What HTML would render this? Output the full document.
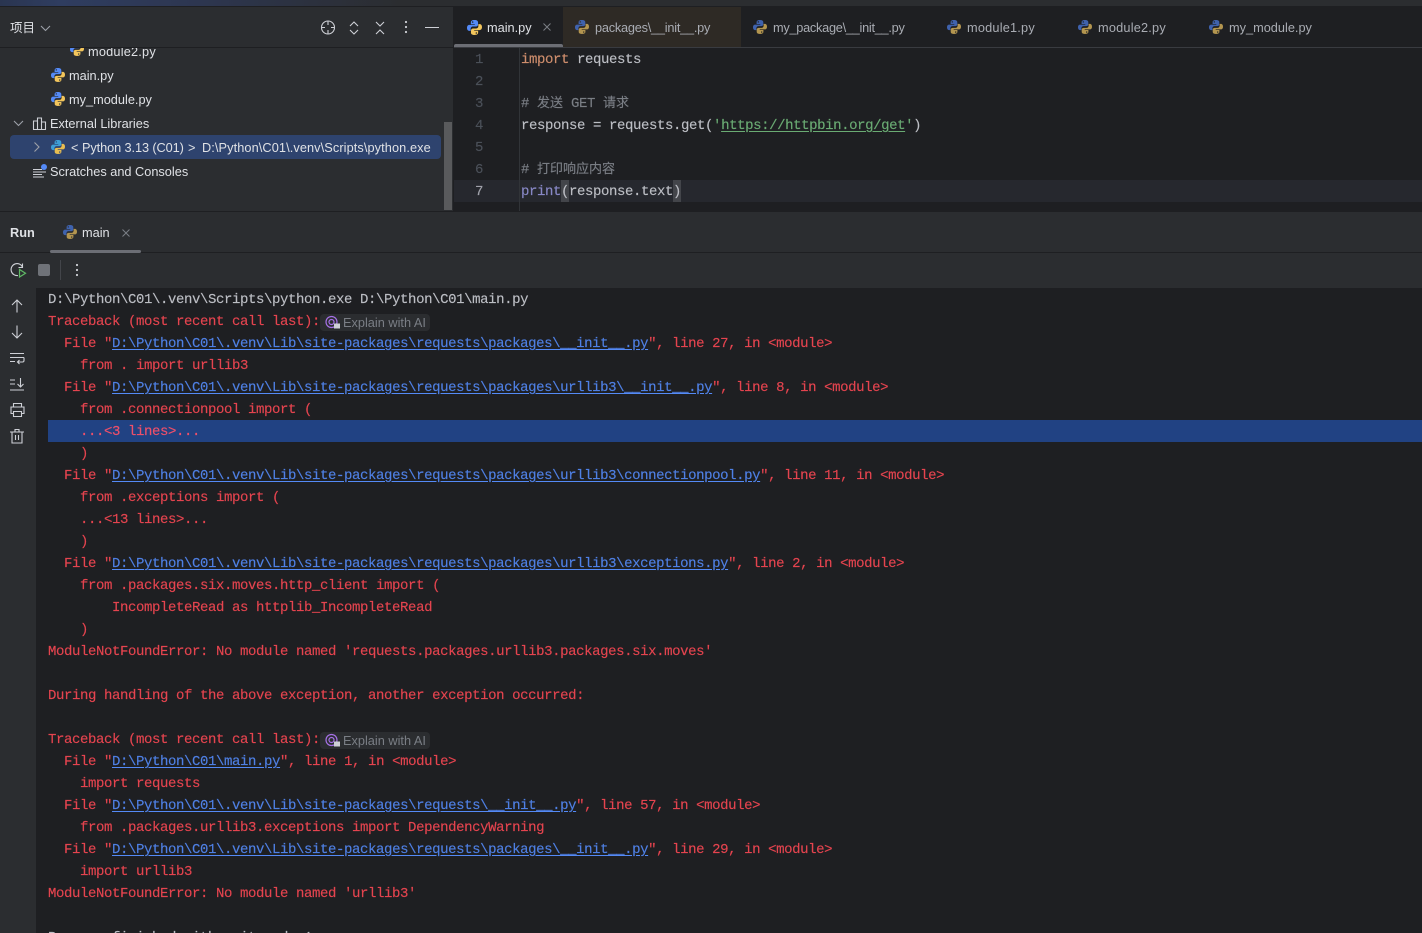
<!DOCTYPE html>
<html><head><meta charset="utf-8"><style>
html,body{margin:0;padding:0;background:#1e1f22;overflow:hidden;width:1422px;height:933px}
#r{width:1422px;height:933px;position:relative;overflow:hidden;font-family:"Liberation Sans","Noto Sans CJK SC",sans-serif;font-size:12.75px;color:#dfe1e5}
.a{position:absolute}
.t{position:absolute;white-space:pre;line-height:18px;height:18px}
.m{position:absolute;white-space:pre;font-family:"Liberation Mono","Noto Sans CJK SC",monospace;font-size:14px;letter-spacing:-.4px;line-height:22px;height:22px;-webkit-text-stroke:.15px currentColor;margin-top:1px}
.m b{font-weight:400;font-size:13px;letter-spacing:0;font-family:"Noto Sans CJK SC",sans-serif;line-height:1}
.c{left:48px;color:#e5444f}
.l{color:#4f80e5;text-decoration:underline;text-decoration-color:#548af7;text-underline-offset:2px}
svg{position:absolute;overflow:visible}
.i{fill:none;stroke:#ced0d6;stroke-width:1.1}
.g{color:#4b5059}
.e{left:521px;color:#bcbec4}
</style></head><body><div id="r">
<svg width="0" height="0"><defs><symbol id="py" viewBox="1 1 14 14"><path d="M8 1C5.5 1 4.6 2 4.6 3.2V5H8.3v.6H3.200C1.800 5.600 1 6.700 1 8.300c0 1.700.8 2.800 2.100 2.800H4.400V9.300c0-1.300 1-2.200 2.300-2.200h2.700c1 0 1.900-.8 1.900-1.900V3.200C11.300 1.900 10.300 1 8 1zM6.300 2.200a.7.700 0 110 1.400.7.700 0 010-1.400z" fill="#548af7"/><path d="M8 15c2.500 0 3.400-1 3.400-2.200V11H7.700v-.6h5.100c1.400 0 2.200-1.100 2.200-2.700 0-1.700-.8-2.800-2.100-2.800h-1.300v1.800c0 1.300-1 2.200-2.300 2.200H6.600c-1 0-1.900.8-1.900 1.900v2C4.700 14.100 5.700 15 8 15zm1.700-1.200a.7.700 0 110-1.400.7.700 0 010 1.400z" fill="#f2c55c"/></symbol>
<symbol id="pd" viewBox="1 1 14 14"><path d="M8 1C5.500 1 4.600 2 4.600 3.200V5H8.300v.6H3.200C1.800 5.600 1 6.700 1 8.300c0 1.700.8 2.800 2.100 2.800H4.400V9.300c0-1.300 1-2.200 2.300-2.200h2.700c1 0 1.900-.8 1.900-1.900V3.200C11.300 1.900 10.300 1 8 1zM6.300 2.200a.7.700 0 110 1.400.7.700 0 010-1.400z" fill="#3f62ad"/><path d="M8 15c2.500 0 3.400-1 3.400-2.200V11H7.700v-.6h5.100c1.400 0 2.200-1.100 2.200-2.700 0-1.700-.8-2.800-2.100-2.800h-1.300v1.800c0 1.300-1 2.200-2.300 2.200H6.600c-1 0-1.900.8-1.900 1.900v2C4.700 14.100 5.700 15 8 15zm1.700-1.200a.7.700 0 110-1.400.7.700 0 010 1.400z" fill="#b3954f"/></symbol>
<symbol id="ps" viewBox="1 1 14 14"><path d="M8 1C5.500 1 4.600 2 4.600 3.200V5H8.300v.6H3.200C1.800 5.600 1 6.700 1 8.300c0 1.700.8 2.800 2.100 2.800H4.400V9.300c0-1.300 1-2.200 2.300-2.200h2.700c1 0 1.900-.8 1.900-1.900V3.200C11.300 1.900 10.300 1 8 1zM6.300 2.200a.7.700 0 110 1.400.7.700 0 010-1.400z" fill="#3d9ed6"/><path d="M8 15c2.500 0 3.400-1 3.400-2.200V11H7.700v-.6h5.100c1.400 0 2.200-1.100 2.200-2.700 0-1.700-.8-2.800-2.100-2.800h-1.300v1.800c0 1.300-1 2.200-2.300 2.200H6.600c-1 0-1.900.8-1.900 1.900v2C4.700 14.100 5.700 15 8 15zm1.700-1.200a.7.700 0 110-1.400.7.700 0 010 1.400z" fill="#e8bd50"/></symbol></defs></svg>

<!-- top strip -->
<div class="a" style="left:0;top:0;width:1422px;height:6px;background:#2b2d30"></div>
<div class="a" style="left:0;top:0;width:400px;height:6px;background:linear-gradient(90deg,#2a3550,#2f3d60 15%,#2d3650 50%,#2b2d30)"></div>
<div class="a" style="left:0;top:6px;width:1422px;height:1px;background:#1e1f22"></div>

<!-- project panel -->
<div class="a" style="left:0;top:7px;width:453px;height:204px;background:#2b2d30"></div>
<div class="a" style="left:0;top:47px;width:453px;height:1px;background:#1e1f22"></div>
<div class="t" style="left:10px;top:19px;font-size:12.5px;color:#dfe1e5">项目</div>
<svg style="left:40px;top:23px" width="11" height="10"><path d="M1 3l4.500 4.500L10 3" fill="none" stroke="#9da0a8" stroke-width="1.100"/></svg>
<svg style="left:320px;top:20px" width="16" height="16"><circle class="i" cx="8" cy="7.500" r="6.500"/><path class="i" d="M8 1v4M8 10v4M1 7.500h4M11 7.500h4"/></svg>
<svg style="left:348px;top:20px" width="12" height="16"><path class="i" d="M2 6l4-4 4 4M2 10l4 4 4-4"/></svg>
<svg style="left:374px;top:20px" width="12" height="16"><path class="i" d="M2 2l4 4 4-4M2 14l4-4 4 4"/></svg>
<svg style="left:403px;top:19px" width="6" height="16"><circle cx="3" cy="3" r="1.100" fill="#ced0d6"/><circle cx="3" cy="8" r="1.100" fill="#ced0d6"/><circle cx="3" cy="13" r="1.100" fill="#ced0d6"/></svg>
<div class="a" style="left:425px;top:26.500px;width:14px;height:1px;background:#ced0d6"></div>

<div class="a" style="left:0;top:48px;width:453px;height:163px;overflow:hidden">
<svg style="left:70px;top:-6px" width="14" height="14"><use href="#py"/></svg>
<div class="t" style="left:88px;top:-5px;letter-spacing:.2px">module2.py</div>
<svg style="left:51px;top:20px" width="14" height="14"><use href="#py"/></svg>
<div class="t" style="left:69px;top:19px">main.py</div>
<svg style="left:51px;top:44px" width="14" height="14"><use href="#py"/></svg>
<div class="t" style="left:69px;top:43px">my_module.py</div>
<svg style="left:13px;top:71px" width="11" height="10"><path d="M1 2l4.500 4.500L10 2" fill="none" stroke="#9da0a8" stroke-width="1.100"/></svg>
<svg style="left:33px;top:69px" width="14" height="13"><path class="i" d="M.5 12.500V4h4v8.500M4.500 12.500V1h4v11.500M8.500 12.500V5h4v7.500M0 12.500h13"/></svg>
<div class="t" style="left:50px;top:67px">External Libraries</div>
<div class="a" style="left:10px;top:87px;width:431px;height:24px;background:#2e436e;border-radius:4px"></div>
<svg style="left:33px;top:93px" width="8" height="12"><path d="M1.500 1.500L6 6l-4.500 4.500" fill="none" stroke="#9da0a8" stroke-width="1.100"/></svg>
<svg style="left:51px;top:92px" width="14" height="14"><use href="#ps"/></svg>
<div class="t" style="left:71px;top:91px">&lt;</div>
<div class="t" style="left:82px;top:91px;letter-spacing:-.1px">Python 3.13 (C01)</div>
<div class="t" style="left:188px;top:91px">&gt;</div>
<div class="t" style="left:202px;top:91px;letter-spacing:.09px">D:\Python\C01\.venv\Scripts\python.exe</div>
<svg style="left:33px;top:116px" width="15" height="14"><path class="i" d="M0 5.500h9M0 8h13M0 10.500h9M0 13h11"/><circle cx="11" cy="3" r="3" fill="#548af7"/></svg>
<div class="t" style="left:50px;top:115px">Scratches and Consoles</div>
</div>
<div class="a" style="left:444px;top:122px;width:8px;height:88px;background:#595a5c"></div>
<div class="a" style="left:453px;top:7px;width:1px;height:204px;background:#1e1f22"></div>

<!-- tabs -->
<div class="a" style="left:454px;top:7px;width:968px;height:40px;background:#1e1f22"></div>
<div class="a" style="left:563px;top:7px;width:178px;height:40px;background:#2e2a25"></div>
<div class="a" style="left:454px;top:47px;width:968px;height:1px;background:#393b40"></div>
<div class="a" style="left:454px;top:44px;width:109px;height:3px;background:#6c6e75;border-radius:2px 2px 0 0"></div>
<svg style="left:467px;top:20px" width="15" height="15"><use href="#py"/></svg>
<div class="t" style="left:487px;top:19px">main.py</div>
<svg style="left:543px;top:23px" width="9" height="9"><path d="M.5.500l7 7M7.500.500l-7 7" stroke="#7a7e85" fill="none"/></svg>
<svg style="left:575px;top:20px" width="14" height="14"><use href="#pd"/></svg>
<div class="t" style="left:595px;top:19px;color:#a9acb3;letter-spacing:-.23px">packages\__init__.py</div>
<svg style="left:753px;top:20px" width="14" height="14"><use href="#pd"/></svg>
<div class="t" style="left:773px;top:19px;color:#a9acb3;letter-spacing:-.27px">my_package\__init__.py</div>
<svg style="left:947px;top:20px" width="14" height="14"><use href="#pd"/></svg>
<div class="t" style="left:967px;top:19px;color:#a9acb3;letter-spacing:.2px">module1.py</div>
<svg style="left:1078px;top:20px" width="14" height="14"><use href="#pd"/></svg>
<div class="t" style="left:1098px;top:19px;color:#a9acb3;letter-spacing:.2px">module2.py</div>
<svg style="left:1209px;top:20px" width="14" height="14"><use href="#pd"/></svg>
<div class="t" style="left:1229px;top:19px;color:#a9acb3">my_module.py</div>

<!-- editor -->
<div class="a" style="left:454px;top:180px;width:968px;height:22px;background:#26282e"></div>
<div class="a" style="left:519px;top:48px;width:1px;height:163px;background:#313438"></div>
<div class="m g" style="left:475px;top:48px">1</div>
<div class="m g" style="left:475px;top:70px">2</div>
<div class="m g" style="left:475px;top:92px">3</div>
<div class="m g" style="left:475px;top:114px">4</div>
<div class="m g" style="left:475px;top:136px">5</div>
<div class="m g" style="left:475px;top:158px">6</div>
<div class="m" style="left:475px;top:180px;color:#a1a3ab">7</div>
<div class="m e" style="top:48px"><span style="color:#cf8e6d">import</span> requests</div>
<div class="m e" style="top:92px;color:#7a7e85"># <b>发送</b> GET <b>请求</b></div>
<div class="m e" style="top:114px">response = requests.get(<span style="color:#6aab73">'<span style="text-decoration:underline;text-underline-offset:2px">https://httpbin.org/get</span>'</span>)</div>
<div class="m e" style="top:158px;color:#7a7e85"># <b>打印响应内容</b></div>
<div class="a" style="left:561px;top:180px;width:8px;height:22px;background:#43454a"></div>
<div class="a" style="left:673px;top:180px;width:8px;height:22px;background:#43454a"></div>
<div class="m e" style="top:180px"><span style="color:#8888c6">print</span>(response.text)</div>
<div class="a" style="left:0;top:211px;width:1422px;height:1px;background:#1e1f22"></div>

<!-- run tool header -->
<div class="a" style="left:0;top:212px;width:1422px;height:76px;background:#2b2d30"></div>
<div class="a" style="left:0;top:252px;width:1422px;height:1px;background:#1e1f22"></div>
<div class="t" style="left:10px;top:224px;font-weight:700">Run</div>
<svg style="left:63px;top:225px" width="14" height="14"><use href="#pd"/></svg>
<div class="t" style="left:82px;top:224px">main</div>
<svg style="left:122px;top:229px" width="8" height="8"><path d="M.5.500l7 7M7.500.500l-7 7" stroke="#7a7e85" fill="none"/></svg>
<div class="a" style="left:50px;top:250px;width:91px;height:3px;background:#6c6e75;border-radius:2px"></div>
<svg style="left:10px;top:262px" width="17" height="17"><path class="i" d="M8 13.500A6 6 0 1 1 12.500 5M12.500 1.500V5.500h-4"/><path d="M9.500 7.500v7.500l6-3.700z" fill="none" stroke="#5fb865" stroke-width="1.200"/></svg>
<div class="a" style="left:38px;top:264px;width:12px;height:12px;background:#6f7278;border-radius:2px"></div>
<div class="a" style="left:60px;top:260px;width:1px;height:20px;background:#43454a"></div>
<svg style="left:74px;top:262px" width="6" height="16"><circle cx="3" cy="3" r="1.100" fill="#ced0d6"/><circle cx="3" cy="8" r="1.100" fill="#ced0d6"/><circle cx="3" cy="13" r="1.100" fill="#ced0d6"/></svg>

<!-- left toolbar -->
<div class="a" style="left:0;top:288px;width:36px;height:645px;background:#2b2d30"></div>
<svg style="left:10px;top:299px" width="14" height="14"><path class="i" d="M7 13.500V1M2 6l5-5 5 5"/></svg>
<svg style="left:10px;top:325px" width="14" height="14"><path class="i" d="M7 .5V13M2 8l5 5 5-5"/></svg>
<svg style="left:10px;top:352px" width="15" height="13"><path class="i" d="M0 1.500h14M0 5.500h14M0 9.500h5M14 5.500v3c0 1-.8 1.500-1.500 1.500H7.500M9.500 8l-2 2 2 2"/></svg>
<svg style="left:10px;top:378px" width="15" height="13"><path class="i" d="M0 2h5M0 6h5M0 12h14M10.500 0v9M7.500 6l3 3 3-3"/></svg>
<svg style="left:10px;top:403px" width="15" height="14"><path class="i" d="M3.500 4V.5h8V4M3.500 10.500H1V4h13v6.500h-2.500M3.500 8.500h8v5h-8z"/></svg>
<svg style="left:10px;top:429px" width="15" height="15"><path class="i" d="M0 3h14M5 3V.5h4V3M2 3v11h10V3M5.500 6v5M8.500 6v5"/></svg>

<!-- console -->
<div class="a" style="left:48px;top:420px;width:1374px;height:22px;background:#214283"></div>
<div class="m" style="left:48px;top:288px;color:#bcbec4">D:\Python\C01\.venv\Scripts\python.exe D:\Python\C01\main.py</div>
<div class="m c" style="top:310px">Traceback (most recent call last):</div>
<div class="a" style="left:320px;top:314px;width:110px;height:17px;background:#2b2d30;border-radius:4px"></div>
<svg style="left:325px;top:315px" width="16" height="15"><circle cx="6.500" cy="7" r="5.500" fill="none" stroke="#a571e6" stroke-width="1.200"/><circle cx="6.500" cy="7" r="2.500" fill="none" stroke="#a571e6" stroke-width="1.200"/><rect x="9" y="8.500" width="6" height="5" fill="#ced0d6"/></svg>
<div class="t" style="left:343px;top:314px;color:#7a7e85">Explain with AI</div>
<div class="m c" style="top:332px">  File "<span class="l">D:\Python\C01\.venv\Lib\site-packages\requests\packages\__init__.py</span>", line 27, in &lt;module&gt;</div>
<div class="m c" style="top:354px">    from . import urllib3</div>
<div class="m c" style="top:376px">  File "<span class="l">D:\Python\C01\.venv\Lib\site-packages\requests\packages\urllib3\__init__.py</span>", line 8, in &lt;module&gt;</div>
<div class="m c" style="top:398px">    from .connectionpool import (</div>
<div class="m c" style="top:420px;color:#f0506a">    ...&lt;3 lines&gt;...</div>
<div class="m c" style="top:442px">    )</div>
<div class="m c" style="top:464px">  File "<span class="l">D:\Python\C01\.venv\Lib\site-packages\requests\packages\urllib3\connectionpool.py</span>", line 11, in &lt;module&gt;</div>
<div class="m c" style="top:486px">    from .exceptions import (</div>
<div class="m c" style="top:508px">    ...&lt;13 lines&gt;...</div>
<div class="m c" style="top:530px">    )</div>
<div class="m c" style="top:552px">  File "<span class="l">D:\Python\C01\.venv\Lib\site-packages\requests\packages\urllib3\exceptions.py</span>", line 2, in &lt;module&gt;</div>
<div class="m c" style="top:574px">    from .packages.six.moves.http_client import (</div>
<div class="m c" style="top:596px">        IncompleteRead as httplib_IncompleteRead</div>
<div class="m c" style="top:618px">    )</div>
<div class="m c" style="top:640px">ModuleNotFoundError: No module named 'requests.packages.urllib3.packages.six.moves'</div>
<div class="m c" style="top:684px">During handling of the above exception, another exception occurred:</div>
<div class="m c" style="top:728px">Traceback (most recent call last):</div>
<div class="a" style="left:320px;top:732px;width:110px;height:17px;background:#2b2d30;border-radius:4px"></div>
<svg style="left:325px;top:733px" width="16" height="15"><circle cx="6.500" cy="7" r="5.500" fill="none" stroke="#a571e6" stroke-width="1.200"/><circle cx="6.500" cy="7" r="2.500" fill="none" stroke="#a571e6" stroke-width="1.200"/><rect x="9" y="8.500" width="6" height="5" fill="#ced0d6"/></svg>
<div class="t" style="left:343px;top:732px;color:#7a7e85">Explain with AI</div>
<div class="m c" style="top:750px">  File "<span class="l">D:\Python\C01\main.py</span>", line 1, in &lt;module&gt;</div>
<div class="m c" style="top:772px">    import requests</div>
<div class="m c" style="top:794px">  File "<span class="l">D:\Python\C01\.venv\Lib\site-packages\requests\__init__.py</span>", line 57, in &lt;module&gt;</div>
<div class="m c" style="top:816px">    from .packages.urllib3.exceptions import DependencyWarning</div>
<div class="m c" style="top:838px">  File "<span class="l">D:\Python\C01\.venv\Lib\site-packages\requests\packages\__init__.py</span>", line 29, in &lt;module&gt;</div>
<div class="m c" style="top:860px">    import urllib3</div>
<div class="m c" style="top:882px">ModuleNotFoundError: No module named 'urllib3'</div>
<div class="m" style="left:48px;top:926px;color:#bcbec4">Process finished with exit code 1</div>
</div></body></html>
